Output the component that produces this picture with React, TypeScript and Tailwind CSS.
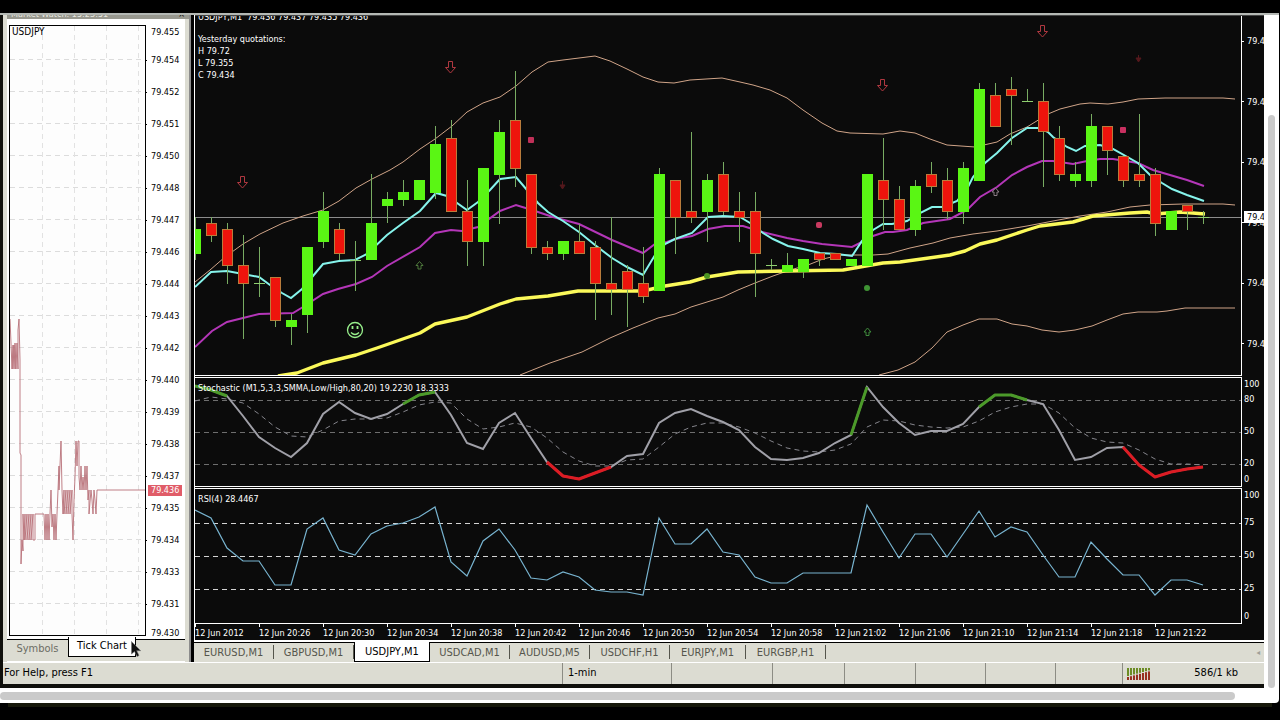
import { useState } from "react";

const CHART_LEFT = 195;
const STEP = 16;

// [direction, body top, body bottom, wick top, wick bottom]
type Candle = ["u" | "d" | "x", number, number, number, number];

const candles: Candle[] = [
  ["u", 229, 254, 217, 260], ["d", 223, 236, 217, 242], ["d", 229, 266, 223, 284], ["d", 265, 284, 235, 339],
  ["x", 283, 284, 247, 297], ["d", 277, 321, 277, 327], ["u", 320, 327, 314, 345], ["u", 247, 315, 247, 333],
  ["u", 211, 242, 192, 248], ["d", 229, 254, 223, 260], ["x", 260, 261, 241, 291], ["u", 223, 260, 174, 260],
  ["u", 199, 206, 192, 223], ["u", 192, 200, 180, 206], ["u", 180, 200, 180, 200], ["u", 144, 193, 126, 199],
  ["d", 138, 212, 120, 212], ["d", 211, 242, 180, 266], ["u", 168, 242, 168, 266], ["u", 132, 175, 120, 224],
  ["d", 120, 169, 71, 187], ["d", 174, 248, 174, 254], ["d", 247, 254, 241, 260], ["u", 241, 254, 241, 260],
  ["d", 241, 254, 224, 254], ["d", 247, 284, 241, 320], ["d", 283, 290, 217, 315], ["d", 271, 290, 265, 327],
  ["d", 283, 297, 247, 303], ["u", 174, 291, 168, 291], ["d", 180, 218, 180, 254], ["d", 211, 218, 132, 223],
  ["u", 180, 212, 174, 242], ["d", 174, 212, 162, 215], ["d", 211, 218, 192, 242], ["d", 211, 254, 192, 297],
  ["x", 265, 266, 259, 270], ["u", 265, 272, 253, 272], ["u", 259, 272, 259, 278], ["d", 253, 260, 253, 266],
  ["d", 253, 260, 253, 260], ["u", 259, 266, 259, 266], ["u", 174, 266, 174, 266], ["d", 180, 200, 138, 230],
  ["d", 199, 230, 186, 230], ["u", 186, 230, 180, 236], ["d", 174, 187, 162, 193], ["d", 180, 212, 168, 219],
  ["u", 168, 212, 162, 224], ["u", 89, 181, 83, 181], ["d", 95, 127, 83, 127], ["d", 89, 96, 77, 145],
  ["x", 101, 102, 89, 101], ["d", 101, 132, 83, 187], ["d", 138, 175, 126, 181], ["u", 174, 181, 162, 187],
  ["u", 126, 181, 114, 187], ["d", 126, 151, 126, 175], ["d", 156, 181, 156, 187], ["d", 174, 181, 114, 187],
  ["d", 174, 224, 168, 236], ["u", 211, 230, 211, 230], ["d", 205, 212, 205, 230], ["x", 217, 218, 211, 224],
];

const bands = [
  "195,282 210,270 225,257 243,244 260,234 283,223 303,216 323,210 339,201 356,188 372,179 390,170 403,162 420,149 435,139 452,126 467,112 483,103 500,97 516,86 532,72 548,62 563,60 595,56 610,61 627,69 643,77 658,82 674,83 690,80 722,78 740,82 753,85 770,90 787,98 803,110 822,123 837,131 850,133 883,134 900,131 915,133 930,139 947,145 975,147 997,142 1010,134 1027,127 1048,114 1060,109 1080,104 1090,103 1108,104 1123,102 1138,99 1165,98 1223,98 1235,99",
  "520,375 550,363 582,352 610,338 633,328 658,318 675,314 691,307 723,297 738,290 755,283 773,276 790,270 808,265 823,259 840,255 873,255 888,254 910,248 933,243 950,238 973,234 997,231 1027,226 1053,221 1080,216 1107,212 1130,207 1150,205 1183,204 1223,204 1235,205",
  "879,375 898,370 915,362 932,348 947,332 963,325 979,319 997,319 1012,324 1027,326 1042,330 1059,332 1075,330 1092,326 1107,320 1123,314 1138,312 1157,312 1167,311 1185,308 1235,308",
];

const fastAverage =
  "195,287 211,272 227,271 243,274 259,277 270,285 282,293 291,298 302,289 313,276 323,264 339,261 355,260 367,254 387,235 403,223 420,211 436,193 447,196 467,210 478,202 490,190 500,179 516,177 527,190 538,203 548,212 563,221 579,232 595,245 612,258 627,267 643,275 655,255 665,244 675,239 692,233 708,217 723,216 740,217 750,223 763,233 773,239 788,246 803,249 820,253 837,254 852,256 862,241 873,230 883,224 892,224 907,221 920,213 932,207 943,207 957,201 968,187 973,177 985,163 997,153 1012,138 1027,128 1040,128 1048,132 1053,137 1067,147 1076,151 1085,146 1100,145 1113,149 1138,163 1150,175 1162,183 1172,189 1187,195 1204,201";
const slowAverage =
  "195,347 212,331 227,322 243,318 259,314 293,313 303,307 323,294 338,289 356,284 372,277 387,266 420,247 435,233 451,230 462,231 478,227 500,211 516,205 532,210 553,217 579,224 612,240 643,253 655,244 667,242 675,239 692,236 708,229 725,226 743,226 762,232 787,238 803,241 822,244 852,247 862,242 873,236 885,232 893,232 907,230 923,223 950,219 967,210 980,197 997,187 1012,175 1027,167 1042,161 1053,161 1073,164 1087,161 1100,159 1113,159 1138,163 1153,170 1187,180 1204,186";
const trend =
  "278,376 297,373 323,363 356,355 377,348 420,333 435,324 467,317 500,304 516,299 548,296 578,291 643,291 665,286 690,282 707,277 738,272 787,271 843,270 860,267 883,263 900,262 950,255 965,251 980,244 997,240 1027,230 1040,226 1073,222 1093,216 1130,213 1147,212 1155,214 1180,212 1205,214";

const stochastic = [
  386, 390, 396, 416, 437, 448, 457, 443, 414, 402, 413, 419, 414, 404, 395, 392, 415, 443, 449, 423, 413, 438, 462, 476,
  479, 473, 467, 456, 454, 423, 413, 409, 416, 422, 430, 447, 459, 460, 458, 453, 443, 435, 387, 407, 423, 435, 431, 431,
  424, 407, 395, 395, 400, 404, 430, 460, 457, 448, 447, 465, 477, 472, 469, 467,
];
const signal = [
  401, 397, 399, 403, 414, 427, 436, 437, 430, 421, 419, 419, 418, 412, 405, 402, 403, 419, 429, 427, 423, 427, 438, 452,
  461, 466, 466, 460, 459, 447, 434, 427, 423, 423, 427, 433, 441, 448, 451, 452, 450, 444, 427, 420, 421, 425, 427, 428,
  427, 421, 412, 407, 404, 404, 413, 428, 438, 442, 443, 450, 459, 464, 464, 465,
];
const rsi = [
  510, 518, 548, 561, 561, 585, 585, 529, 518, 550, 555, 534, 526, 523, 517, 507, 562, 576, 541, 529, 550, 578, 580, 572,
  577, 590, 592, 592, 595, 518, 544, 544, 529, 552, 555, 577, 583, 583, 573, 573, 573, 573, 505, 532, 558, 534, 534, 557,
  534, 511, 537, 527, 532, 555, 577, 577, 542, 559, 575, 575, 595, 580, 580, 585,
];

const highlights = [
  { from: 0, to: 2, color: "#4c9a2a" },
  { from: 13, to: 15, color: "#4c9a2a" },
  { from: 41, to: 42, color: "#4c9a2a" },
  { from: 49, to: 52, color: "#4c9a2a" },
  { from: 22, to: 26, color: "#dc1c24" },
  { from: 58, to: 63, color: "#dc1c24" },
];

const tickPrices = [
  "79.454", "79.452", "79.451", "79.450", "79.448", "79.447", "79.446", "79.444", "79.443",
  "79.442", "79.440", "79.439", "79.438", "79.437", "79.435", "79.434", "79.433", "79.431",
];

const tickLine =
  "10,319 11,343 12,369 13,345 13,369 14,345 15,369 15,343 16,369 17,343 18,369 18,330 19,319 20,360 20,453 21,455 21,564 22,540 23,551 23,514 24,540 25,514 25,540 27,514 27,540 29,514 29,540 31,514 31,540 33,514 33,540 35,540 35,514 44,514 45,540 46,514 47,540 48,514 49,540 50,514 51,490 52,527 53,514 54,540 55,514 56,540 57,514 58,490 59,466 59,490 61,441 62,490 63,514 64,490 64,514 66,490 66,514 68,490 68,514 70,490 70,514 72,490 72,514 73,540 74,500 75,477 76,441 77,466 78,441 79,441 79,477 80,490 81,466 82,490 83,477 84,490 85,466 86,490 87,466 88,500 89,490 89,514 91,490 92,500 93,514 94,490 95,500 96,514 97,490 145,490";

const times = [
  "12 Jun 2012", "12 Jun 20:26", "12 Jun 20:30", "12 Jun 20:34", "12 Jun 20:38", "12 Jun 20:42", "12 Jun 20:46", "12 Jun 20:50",
  "12 Jun 20:54", "12 Jun 20:58", "12 Jun 21:02", "12 Jun 21:06", "12 Jun 21:10", "12 Jun 21:14", "12 Jun 21:18", "12 Jun 21:22",
];

const chartTabs = [
  { name: "EURUSD,M1", size: "w-20" },
  { name: "GBPUSD,M1", size: "w-20" },
  { name: "USDJPY,M1", size: "w-[76px]" },
  { name: "USDCAD,M1", size: "w-20" },
  { name: "AUDUSD,M5", size: "w-20" },
  { name: "USDCHF,H1", size: "w-20" },
  { name: "EURJPY,M1", size: "w-[76px]" },
  { name: "EURGBP,H1", size: "w-20" },
];

const toPoints = (values: number[], start = 0) =>
  values.map((y, i) => `${CHART_LEFT + (start + i) * STEP},${y}`).join(" ");

const DownArrow = ({ x, y }: { x: number; y: number }) => (
  <path
    d={`M${x - 2} ${y - 5.5}h4v6h3l-5 5.5l-5 -5.5h3z`}
    fill="none"
    stroke="#b03840"
    strokeWidth="1"
  />
);

const UpArrow = ({ x, y, color }: { x: number; y: number; color: string }) => (
  <path d={`M${x} ${y - 4}l3.5 4h-2v3.5h-3v-3.5h-2z`} fill="none" stroke={color} strokeWidth="1" />
);

const PriceChart = () => (
  <svg className="block h-[359px] min-w-0 flex-1" viewBox="195 16 1046 359" preserveAspectRatio="none">
    <line x1="195" x2="1242" y1="217.5" y2="217.5" stroke="#8c8c8c" />
    {bands.map((points) => (
      <polyline key={points} points={points} fill="none" stroke="#d0a488" strokeWidth="1" />
    ))}
    <polyline points={slowAverage} fill="none" stroke="#b436b8" strokeWidth="2" />
    <polyline points={fastAverage} fill="none" stroke="#86f4ec" strokeWidth="2" />
    <polyline points={trend} fill="none" stroke="#fbf95a" strokeWidth="3.4" strokeLinejoin="round" />
    {candles.map(([kind, top, bottom, high, low], i) => {
      const x = CHART_LEFT + i * STEP;
      return (
        <g key={i}>
          <line x1={x + 0.5} x2={x + 0.5} y1={high} y2={low} stroke="#78ac62" />
          {kind === "x" && <rect x={x - 5} y={top} width="11" height="1" fill="#8fd070" />}
          {kind === "u" && <rect x={x - 5} y={top} width="11" height={bottom - top} fill="#5af614" />}
          {kind === "d" && (
            <rect x={x - 4.5} y={top + 0.5} width="10" height={bottom - top - 1} fill="#ee140c" stroke="#b97c3c" />
          )}
        </g>
      );
    })}
    <DownArrow x={242.5} y={182} />
    <DownArrow x={450.5} y={67} />
    <DownArrow x={882.5} y={85} />
    <DownArrow x={1042.5} y={31} />
    <UpArrow x={419.5} y={265.5} color="#4f7a3c" />
    <UpArrow x={867.5} y={332} color="#3f8a3c" />
    <UpArrow x={995.5} y={192} color="#8a7c84" />
    <rect x="528" y="137" width="6" height="6" rx="1" fill="#c03058" />
    <rect x="816" y="222" width="6" height="6" rx="2" fill="#c83a60" />
    <rect x="1120" y="127" width="6" height="6" rx="1" fill="#c83060" />
    <circle cx="707" cy="276" r="3" fill="#4c9422" />
    <circle cx="867" cy="288" r="3" fill="#3f9434" />
    <path d="M562.5 181v5M560 185h5l-2.5 4z" fill="#54181c" stroke="#54181c" />
    <path d="M1138.5 55v5M1136 58h5l-2.5 4z" fill="#54181c" stroke="#54181c" />
    <g fill="none" stroke="#98f08c">
      <circle cx="355" cy="330" r="7.5" strokeWidth="1.3" />
      <path d="M351 332.5q4 4 8 0" strokeWidth="1.3" />
      <path d="M352.5 326v3M357.5 326v3" strokeWidth="1.8" />
    </g>
  </svg>
);

const StochasticChart = () => (
  <svg className="block h-[108px] min-w-0 flex-1" viewBox="195 378 1046 108" preserveAspectRatio="none">
    {[400.5, 432.5, 464.5].map((y) => (
      <line key={y} x1="195" x2="1242" y1={y} y2={y} stroke="#6e6e6e" strokeDasharray="5 4" />
    ))}
    <polyline points={toPoints(signal)} fill="none" stroke="#85858c" strokeDasharray="5 4" />
    <polyline points={toPoints(stochastic)} fill="none" stroke="#a0a0a8" strokeWidth="2" />
    {highlights.map(({ from, to, color }) => (
      <polyline
        key={from}
        points={toPoints(stochastic.slice(from, to + 1), from)}
        fill="none"
        stroke={color}
        strokeWidth="3"
        strokeLinejoin="round"
      />
    ))}
  </svg>
);

const RsiChart = () => (
  <svg className="block h-[134px] min-w-0 flex-1" viewBox="195 489 1046 134" preserveAspectRatio="none">
    {[523.5, 556.5, 589.5].map((y) => (
      <line key={y} x1="195" x2="1242" y1={y} y2={y} stroke="#d4d4d4" strokeDasharray="5 4" />
    ))}
    <polyline points={toPoints(rsi)} fill="none" stroke="#78b4d0" strokeWidth="1.2" />
  </svg>
);

const TickChart = () => (
  <svg
    className="block h-[609px] w-full"
    viewBox="10 26 135 609"
    preserveAspectRatio="none"
  >
    {Array.from({ length: 18 }, (_, i) => (
      <line key={i} x1="10" x2="145" y1={59.5 + i * 32} y2={59.5 + i * 32} stroke="#dcdcdc" strokeDasharray="5 4" />
    ))}
    {[42.5, 74.5, 106.5, 138.5].map((x) => (
      <line key={x} x1={x} x2={x} y1="26" y2="635" stroke="#e2e2e2" strokeDasharray="5 4" />
    ))}
    <polyline points={tickLine} fill="none" stroke="#b87078" strokeWidth="0.9" />
  </svg>
);

const Connection = () => (
  <svg className="h-3 w-6" viewBox="0 0 24 12">
    {Array.from({ length: 8 }, (_, i) => (
      <g key={i}>
        <rect x={i * 3} y="0" width="2" height={8 - i * 0.8} fill="#6c8c24" />
        <rect x={i * 3} y={9 - i * 0.8} width="2" height={3 + i * 0.8} fill="#983020" />
      </g>
    ))}
  </svg>
);

const MarketWatch = () => {
  const [tab, setTab] = useState("Tick Chart");

  return (
    <aside className="flex w-[188px] shrink-0 flex-col border-r-2 border-[#8c8c8c] bg-[#dcdcd2] pl-1">
      <header className="flex h-1 items-end justify-between overflow-hidden bg-[#98988f] px-1 text-[9px] leading-[9px] text-[#e8e8e0]">
        <span>Market Watch: 15:23:51</span>
        <span className="text-black">×</span>
      </header>
      <div className="mr-1 flex bg-white pl-[2px]">
        <div className="w-[137px] shrink-0 pt-[6px]">
          <div className="border border-black bg-[#fdfdfd]">
            <div className="relative">
              <TickChart />
              <span className="absolute top-0 left-[2px] text-[10px] leading-3">USDJPY</span>
            </div>
          </div>
        </div>
        <div className="relative flex-1 text-[9px] leading-3">
          <div className="flex h-[25px] items-center pl-[5px]">79.455</div>
          {tickPrices.map((price) => (
            <div key={price} className="flex h-8 items-center">
              <span className="mr-1 h-px w-px bg-black" />
              {price}
            </div>
          ))}
          <div className="flex h-[19px] items-end pl-[5px]">79.430</div>
          <span className="absolute top-[466px] left-[2px] bg-[#e05c68] px-[3px] leading-[11px] text-white">79.436</span>
        </div>
      </div>
      <div role="tablist" className="relative mr-1 flex h-[23px] border-b border-white text-[11px]">
        {["Symbols", "Tick Chart"].map((name) => (
          <button
            key={name}
            role="tab"
            aria-selected={tab === name}
            onClick={() => setTab(name)}
            className={
              tab === name
                ? "-mt-[2px] h-5 w-[68px] border-x border-b border-black bg-white text-black"
                : "h-5 w-[61px] border-t border-black text-[#6c6c64]"
            }
          >
            {name}
          </button>
        ))}
        <span className="flex-1 border-t border-black" />
        <svg className="absolute top-[2px] left-[124px] h-4 w-3" viewBox="0 0 12 16">
          <path d="M0.5 0.5v12.5l3 -2.5l2.5 5l2 -1l-2.3 -4.8h4z" fill="#111" stroke="#777" strokeWidth="0.6" />
        </svg>
      </div>
    </aside>
  );
};

const App = () => {
  const [active, setActive] = useState("USDJPY,M1");

  return (
    <div className="min-h-screen bg-black pt-[13px] font-['DejaVu_Sans_Condensed','DejaVu_Sans',sans-serif]">
      <div className="mr-px rounded-br bg-white">
        <div className="h-[2px] bg-[#b4b8b4]" />
        <div className="flex">
          <main className="flex min-w-0 flex-1 flex-col border-b-4 border-l-[3px] border-[#10100c] bg-[#dcdcd2]">
            <div className="flex">
              <MarketWatch />
              <section className="min-w-0 flex-1 border-l-[3px] border-black bg-[#dcdcd2]">
                <div className="border-l border-white bg-[#0b0b0b] text-[9px] leading-3 text-white">
                  <div className="flex border-t border-t-[#444]">
                    <div className="relative flex min-w-0 flex-1 overflow-hidden border-r border-b border-white">
                      <PriceChart />
                      <div className="absolute -top-[5px] left-[3px]">
                        <p className="whitespace-pre">USDJPY,M1  79.436 79.437 79.435 79.436</p>
                        <p className="mt-[10px]">Yesterday quotations:</p>
                        <p>H 79.72</p>
                        <p>L 79.355</p>
                        <p>C 79.434</p>
                      </div>
                    </div>
                    <div className="relative flex w-[22px] flex-col justify-between overflow-hidden pt-[19px] pb-[26px]">
                      {[1, 2, 3, 4, 5, 6].map((n) => (
                        <span key={n} className="flex items-center gap-[3px]">
                          <span className="h-px w-[2px] shrink-0 bg-white" />
                          79.4
                        </span>
                      ))}
                      <span className="absolute top-[195px] left-[2px] w-full bg-white pl-[3px] text-black">79.4</span>
                    </div>
                  </div>
                  <div className="flex">
                    <div className="relative mt-px flex min-w-0 flex-1 border-y border-r border-white">
                      <StochasticChart />
                      <p className="absolute top-1 left-[3px]">Stochastic (M1,5,3,3,SMMA,Low/High,80,20) 19.2230 18.3333</p>
                    </div>
                    <div className="flex w-[22px] flex-col pt-[2px] pl-[2px]">
                      <span className="h-[15px]">100</span>
                      <span className="h-8">80</span>
                      <span className="h-8">50</span>
                      <span className="h-4">20</span>
                      <span>0</span>
                    </div>
                  </div>
                  <div className="flex">
                    <div className="relative mt-px flex min-w-0 flex-1 border-y border-r border-white">
                      <RsiChart />
                      <p className="absolute top-1 left-[3px]">RSI(4) 28.4467</p>
                    </div>
                    <div className="flex w-[22px] flex-col pt-[2px] pl-[2px]">
                      <span className="h-[27px]">100</span>
                      <span className="h-[33px]">75</span>
                      <span className="h-[33px]">50</span>
                      <span className="h-7">25</span>
                      <span>0</span>
                    </div>
                  </div>
                  <div className="mr-[22px] grid h-4 grid-cols-[repeat(16,64fr)_23fr]">
                    {times.map((time) => (
                      <div key={time} className="min-w-0 whitespace-nowrap">
                        <div className="h-[3px] w-px bg-white" />
                        {time}
                      </div>
                    ))}
                  </div>
                </div>
                <div className="flex h-[22px] border-t-2 border-white">
                  <div role="tablist" className="flex min-w-0 flex-1 border-t border-black text-[11px] leading-4">
                    {chartTabs.map(({ name, size }) => (
                      <button
                        key={name}
                        role="tab"
                        aria-selected={active === name}
                        onClick={() => setActive(name)}
                        className={
                          active === name
                            ? `${size} -mt-px border-x border-b border-black bg-white text-black`
                            : `${size} mt-[2px] mb-[3px] border-r border-[#55554c] text-[#55554c]`
                        }
                      >
                        {name}
                      </button>
                    ))}
                    <button aria-label="Scroll tabs left" className="ml-auto px-1 text-[8px] text-[#a0a098]">
                      ◂
                    </button>
                  </div>
                </div>
              </section>
            </div>
            <footer className="flex h-[22px] items-stretch border-t border-white text-[11px] text-black *:flex *:items-center *:border-[#8c8c84]">
              <div className="flex-1 pl-px">For Help, press F1</div>
              <div className="w-[109px] border-l pl-[5px]">1-min</div>
              <div className="w-[101px] border-l" />
              <div className="w-[72px] border-l" />
              <div className="w-[71px] border-l" />
              <div className="w-[70px] border-l" />
              <div className="w-[70px] border-l" />
              <div className="w-[67px] border-l" />
              <div className="w-[142px] justify-between border-l pr-[26px] pl-1">
                <Connection />
                586/1 kb
              </div>
            </footer>
          </main>
          <div className="flex w-[15px] flex-col px-1">
            <div className="mt-[100px] flex-1 rounded-full bg-[#cacaca]" />
          </div>
        </div>
        <div className="flex h-[15px] pt-1 pr-11">
          <div className="h-2 flex-1 rounded-full bg-[#cacaca]" />
        </div>
      </div>
      <div className="mx-2 h-1 bg-[#16180a]" />
    </div>
  );
};

export default App;
